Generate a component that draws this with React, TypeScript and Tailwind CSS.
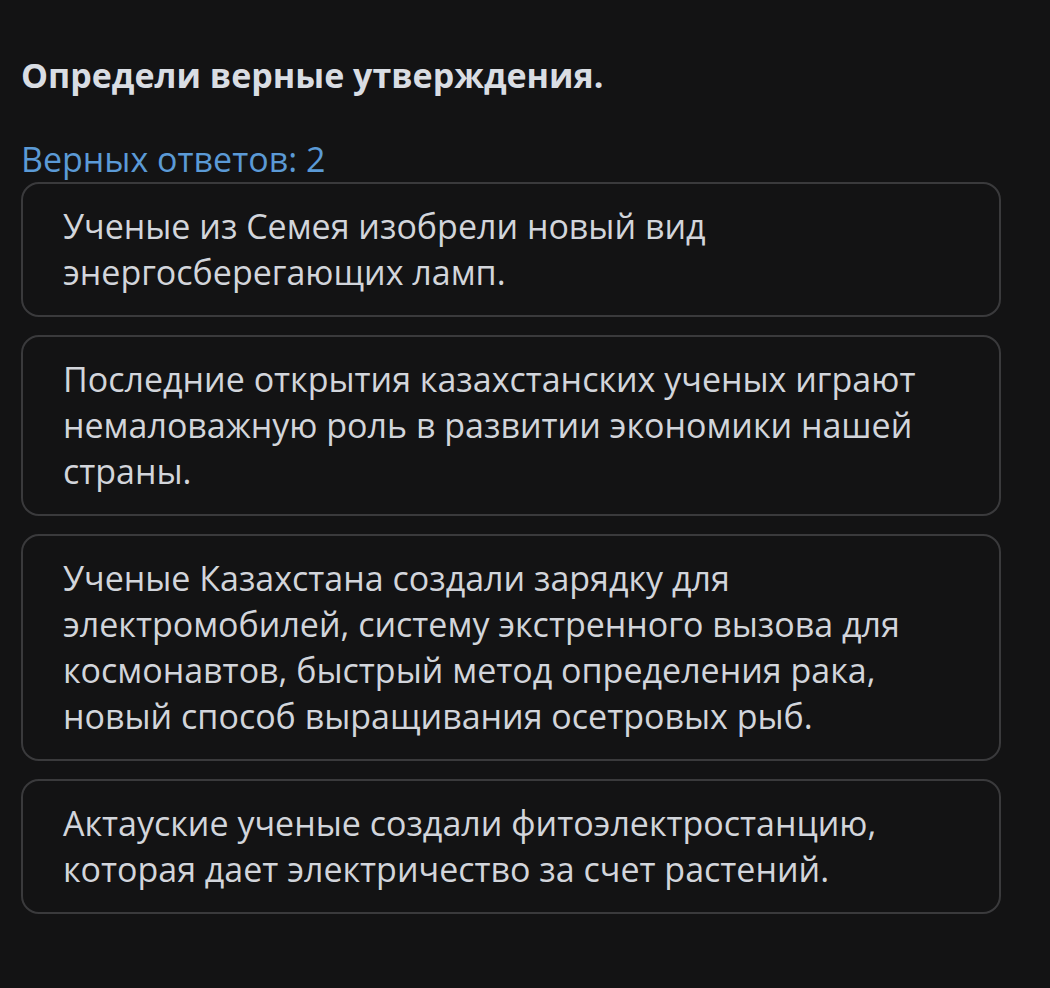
import React from "react";

const items = [
  "Ученые из Семея изобрели новый вид энергосберегающих ламп.",
  "Последние открытия казахстанских ученых играют немаловажную роль в развитии экономики нашей страны.",
  "Ученые Казахстана создали зарядку для электромобилей, систему экстренного вызова для космонавтов, быстрый метод определения рака, новый способ выращивания осетровых рыб.",
  "Актауские ученые создали фитоэлектростанцию, которая дает электричество за счет растений.",
];

export default function App() {
  return (
    <div
      className="w-[1050px] h-[988px] bg-[#131314] overflow-hidden"
      style={{ fontFamily: '"Open Sans", "Noto Sans", sans-serif' }}
    >
      <div className="pl-[21px] pr-[49px] pt-[52px]">
        <h1 className="text-[34px] leading-[46px] font-bold text-[#d9dde3]">
          Определи верные утверждения.
        </h1>
        <div className="mt-[41px] text-[34px] leading-[40px] text-[#5b9ad6]">
          Верных ответов: 2
        </div>
        <div className="mt-[3px] flex flex-col gap-[18px]">
          {items.map((t, i) => (
            <div
              key={i}
              className="border-2 border-[#3a3a3c] rounded-[18px] pl-[40px] pr-[40px] pt-[19px] pb-[20px] text-[34px] leading-[46px] text-[#d2d5db]"
            >
              {t}
            </div>
          ))}
        </div>
      </div>
    </div>
  );
}
